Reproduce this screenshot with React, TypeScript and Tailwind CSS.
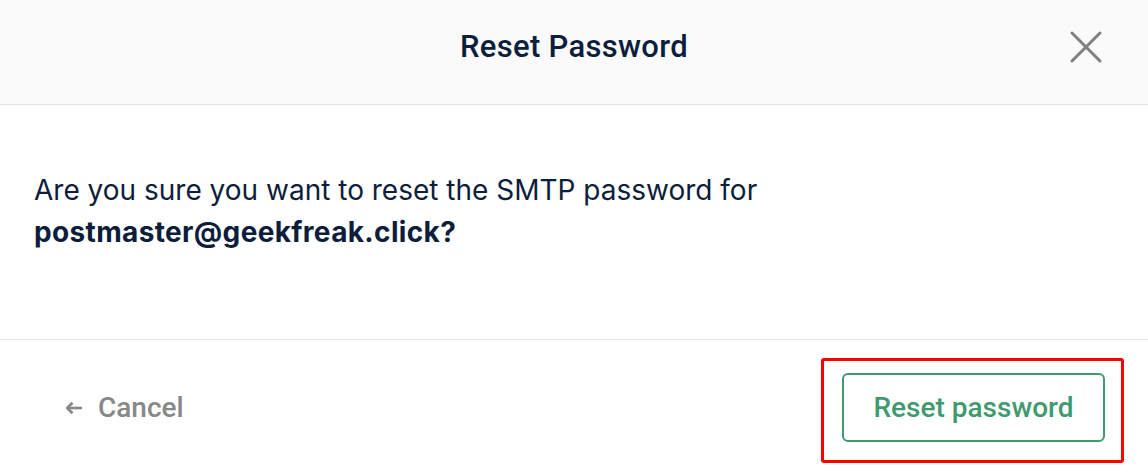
import { X } from "lucide-react";

export default function App() {
  return (
    <div className="w-[1148px] h-[472px] bg-white flex flex-col font-['Roboto',sans-serif] overflow-hidden">
      <div className="h-[105px] shrink-0 bg-[#fafafa] border-b border-[#e3e3e3] flex items-center justify-center pb-[10px] relative">
        <h2 className="text-[31px] font-medium text-[#0c1e3c] tracking-[0.3px]">Reset Password</h2>
        <button className="absolute right-[34px] top-[19px] text-[#808080]">
          <X size={56} strokeWidth={1.3} />
        </button>
      </div>

      <div className="h-[235px] shrink-0 border-b border-[#e3e3e3] px-[34px] pt-[64px]">
        <p className="font-['Inter',sans-serif] text-[28px] leading-[42px] text-[#0c1e3c]">
          Are you sure you want to reset the SMTP password for
          <br />
          <span className="font-bold tracking-[0.35px]">postmaster@geekfreak.click?</span>
        </p>
      </div>

      <div className="flex-1 flex items-start justify-between pt-[18px] pl-[65px] pr-[24px]">
        <button className="mt-[15px] h-[69px] flex items-center gap-[15px] text-[#888888] text-[28px] font-medium">
          <svg width="18" height="14" viewBox="0 0 18 14" fill="none" stroke="currentColor" strokeWidth="2.6" strokeLinejoin="round">
            <path d="M17 7H2.5" />
            <path d="M7.5 1.8L2.2 7l5.3 5.2" />
          </svg>
          Cancel
        </button>
        <div className="border-[3px] border-[#ff0000] rounded-[3px] pl-[18px] pr-[16px] pt-[12px] pb-[18px]">
          <button className="h-[69px] w-[263px] border-2 border-[#3f9a6f] rounded-[6px] text-[#3f9a6f] text-[28px] font-medium">
            Reset password
          </button>
        </div>
      </div>
    </div>
  );
}
